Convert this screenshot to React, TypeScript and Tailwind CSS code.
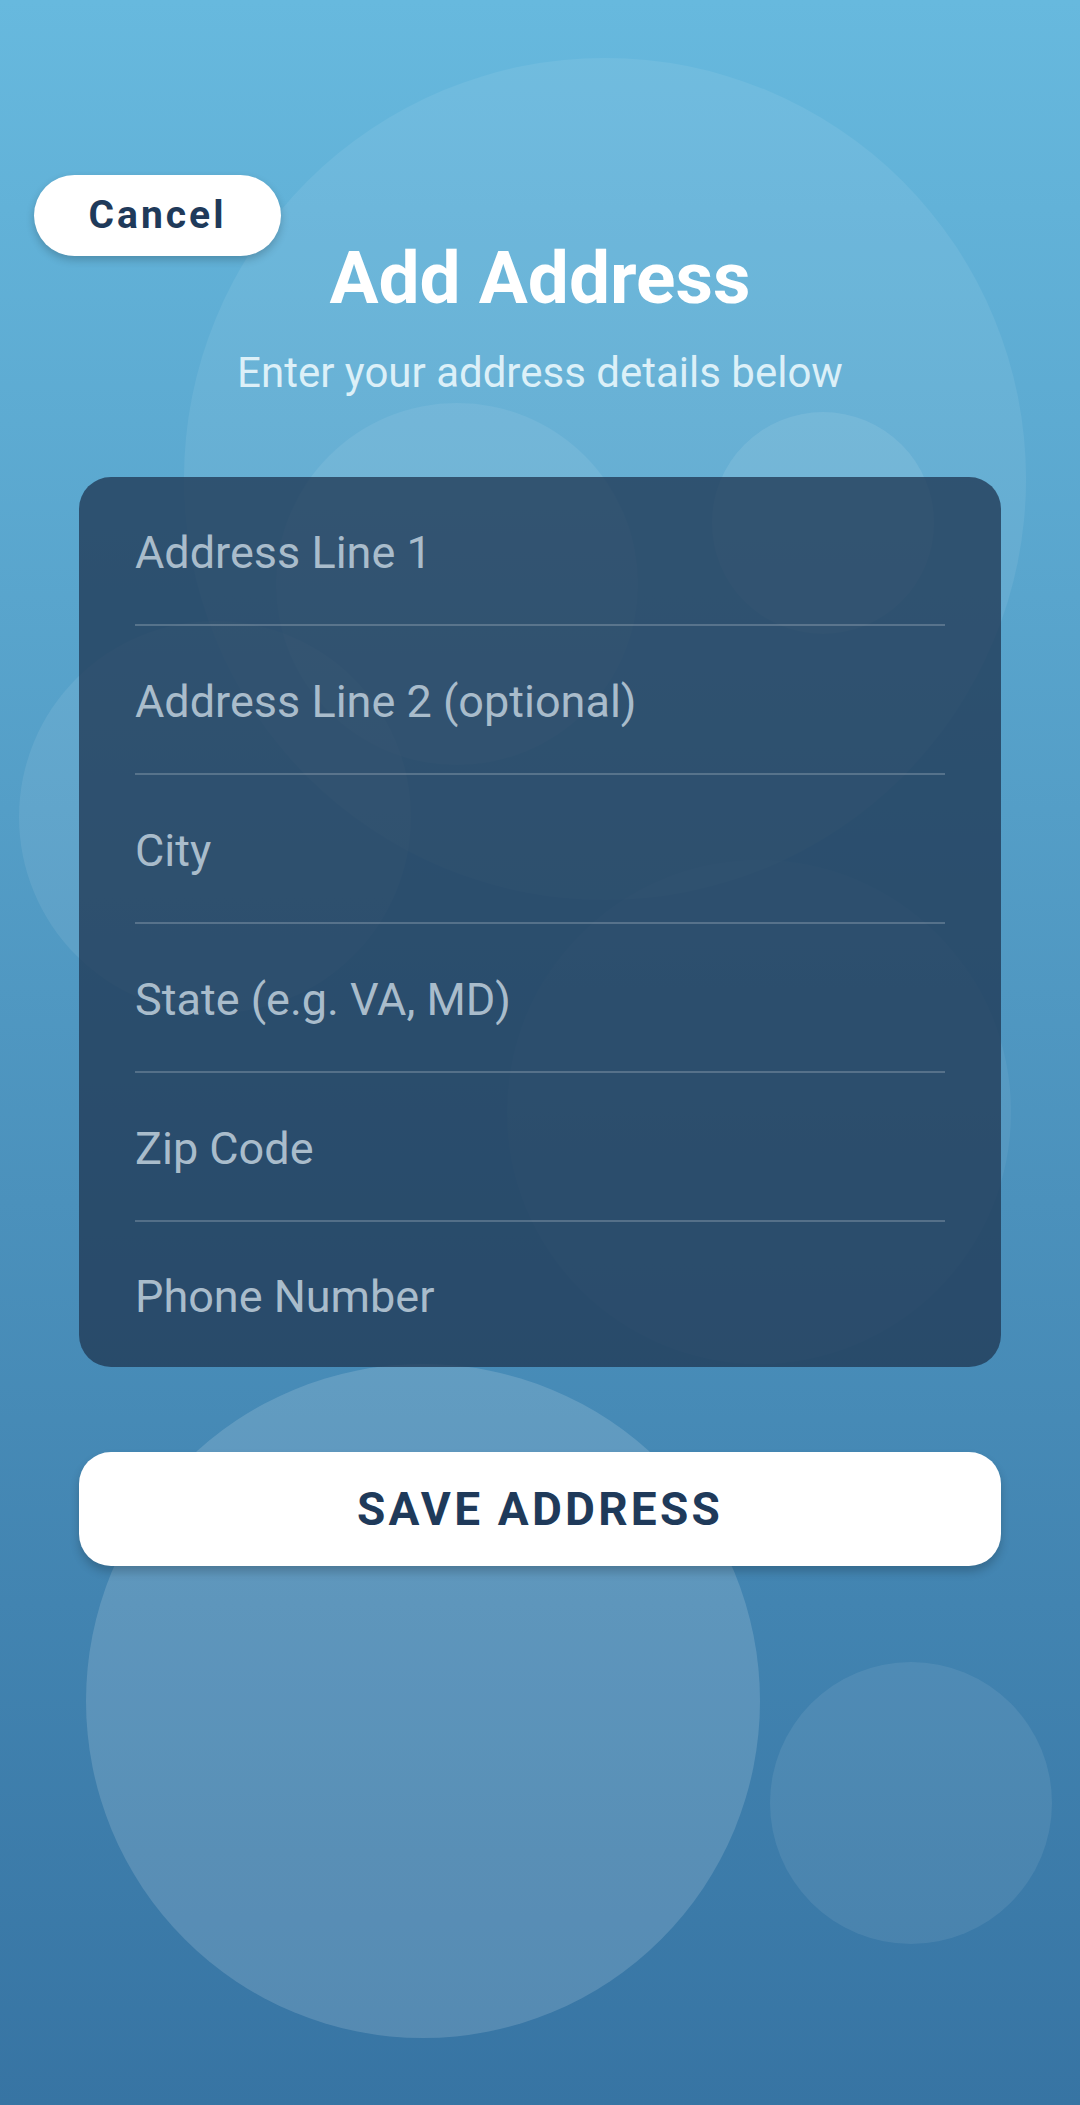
const fields = [
  'Address Line 1',
  'Address Line 2 (optional)',
  'City',
  'State (e.g. VA, MD)',
  'Zip Code',
  'Phone Number',
];

const AddAddressPage = () => {
  return (
    <div
      className="relative min-h-[2105px] w-full overflow-hidden bg-gradient-to-b from-[#67b9de] to-[#3774a3]"
      style={{ fontFamily: 'Roboto, "Noto Sans", sans-serif' }}
    >
      {/* background bubbles */}
      <div className="absolute left-[184px] top-[58px] h-[842px] w-[842px] rounded-full bg-white/[0.07]" />
      <div className="absolute left-[276px] top-[403px] h-[362px] w-[362px] rounded-full bg-white/[0.07]" />
      <div className="absolute left-[712px] top-[412px] h-[222px] w-[222px] rounded-full bg-white/[0.09]" />
      <div className="absolute left-[19px] top-[621px] h-[392px] w-[392px] rounded-full bg-white/[0.08]" />
      <div className="absolute left-[507px] top-[860px] h-[504px] w-[504px] rounded-full bg-white/[0.05]" />
      <div className="absolute left-[86px] top-[1364px] h-[674px] w-[674px] rounded-full bg-white/[0.15]" />
      <div className="absolute left-[770px] top-[1662px] h-[282px] w-[282px] rounded-full bg-white/[0.08]" />

      <button className="absolute left-[34px] top-[175px] z-20 flex h-[81px] w-[247px] items-center justify-center rounded-full bg-white text-[39px] font-bold tracking-[3px] text-[#1f3a5a] shadow-[0_4px_8px_rgba(0,0,0,0.2)]">
        Cancel
      </button>

      <div className="relative z-10 flex flex-col pt-[235px]">
        <h1 className="text-center text-[73px] font-bold leading-[86px] text-white">Add Address</h1>
        <p className="mt-[27px] text-center text-[42px] leading-[49px] text-[#dcf0f8]">
          Enter your address details below
        </p>

        <div className="mx-[79px] mt-[80px] flex flex-col rounded-[32px] bg-[rgba(32,56,84,0.78)] px-[56px]">
          {fields.map((label, i) => (
            <div
              key={label}
              className={
                i < fields.length - 1
                  ? 'flex h-[149px] items-center border-b-[2px] border-white/20 pt-[4px] text-[45px] text-[#a9bccb]'
                  : 'flex h-[145px] items-center pt-[4px] text-[45px] text-[#a9bccb]'
              }
            >
              {label}
            </div>
          ))}
        </div>

        <button className="mx-[79px] mt-[85px] flex h-[114px] items-center justify-center rounded-[32px] bg-white text-[46px] font-bold tracking-[3.2px] text-[#1f3a5a] shadow-[0_6px_10px_rgba(0,0,0,0.2)]">
          SAVE ADDRESS
        </button>
      </div>
    </div>
  );
};

export default AddAddressPage;
